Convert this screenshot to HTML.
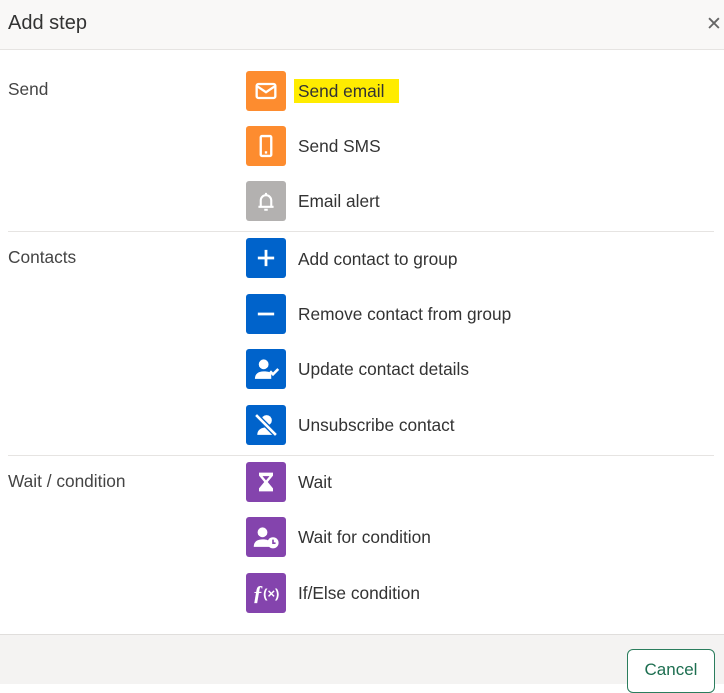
<!DOCTYPE html>
<html><head><meta charset="utf-8"><style>
*{margin:0;padding:0;box-sizing:border-box}
body{width:724px;height:684px;overflow:hidden;background:#fff;font-family:"Liberation Sans",Arial,sans-serif;color:#333;position:relative}
.hdr{position:absolute;left:0;top:0;width:724px;height:50px;background:#f9f8f7;border-bottom:1px solid #e6e4e2}
.hdr .t{position:absolute;left:8px;top:12px;font-size:20px;color:#333}
.hdr .x{position:absolute;left:706px;top:13px;font-size:19px;font-weight:300;color:#666}
.lbl{position:absolute;left:8px;font-size:17.3px;color:#444}
.div{position:absolute;left:8px;width:706px;height:1px;background:#e6e4e2}
.ic{position:absolute;left:246px;width:40px;height:40px;border-radius:3px;display:flex;align-items:center;justify-content:center}
.ic svg{width:28px;height:28px}
.o{background:#fd8c2f}.g{background:#b3b1b0}.b{background:#0063cb}.p{background:#8444ad}
.it{position:absolute;left:298px;font-size:17.3px;color:#333}
.hl{position:absolute;left:294px;top:79px;width:105px;height:24px;background:#ffec00}
.ftr{position:absolute;left:0;top:634px;width:724px;height:50px;background:#f4f3f2;border-top:1px solid #e0dedc}
.btn{position:absolute;left:627px;top:649px;width:88px;height:44px;border:1.5px solid #2b7d5d;border-radius:6px;background:#fff;color:#1d6e50;font-size:17px;text-align:center;line-height:40px}
</style></head><body>
<div class="hdr"><div class="t">Add step</div><div class="x">✕</div></div>

<div class="lbl" style="top:79px">Send</div>
<div class="hl"></div>
<div class="ic o" style="top:71px"><svg viewBox="0 0 24 24" fill="none" stroke="#fff" stroke-width="2"><rect x="4" y="6" width="16" height="12" rx="1.5"/><path d="M4.5 8l7.5 5 7.5-5"/></svg></div>
<div class="it" style="top:81px">Send email</div>
<div class="ic o" style="top:126px"><svg viewBox="0 0 24 24" fill="none" stroke="#fff" stroke-width="2"><rect x="7.5" y="3.5" width="9" height="17" rx="1"/><path d="M11 17.5h2"/></svg></div>
<div class="it" style="top:136px">Send SMS</div>
<div class="ic g" style="top:181px"><svg viewBox="0 0 24 24" fill="none" stroke="#fff" stroke-width="1.8"><path d="M7.5 17V11.5a4.5 4.5 0 0 1 9 0V17M5.5 17h13M10.5 19.5h3M12 5v2"/></svg></div>
<div class="it" style="top:191px">Email alert</div>

<div class="div" style="top:231px"></div>
<div class="lbl" style="top:247px">Contacts</div>
<div class="ic b" style="top:238px"><svg viewBox="0 0 24 24" fill="none" stroke="#fff" stroke-width="2.4"><path d="M12 5v14M5 12h14"/></svg></div>
<div class="it" style="top:249px">Add contact to group</div>
<div class="ic b" style="top:294px"><svg viewBox="0 0 24 24" fill="none" stroke="#fff" stroke-width="2.4"><path d="M5 12h14"/></svg></div>
<div class="it" style="top:304px">Remove contact from group</div>
<div class="ic b" style="top:349px"><svg viewBox="0 0 24 24" fill="#fff"><circle cx="10" cy="8" r="4.2"/><path d="M2.5 20.5c0-4.5 3-6.5 7.5-6.5s6 1 6.5 2v4.5z"/><path d="M15.5 14l2.5 2.5L22.5 12" fill="none" stroke="#fff" stroke-width="2.2"/></svg></div>
<div class="it" style="top:359px">Update contact details</div>
<div class="ic b" style="top:405px"><svg viewBox="0 0 24 24" fill="#fff"><circle cx="12.5" cy="8" r="4.5"/><path d="M4.5 20.5c0-4.5 3.5-6.5 8-6.5s8 2 8 6.5z"/><path d="M3.5 3.5l17 17" stroke="#0063cb" stroke-width="4.5"/><path d="M3.5 3.5l17 17" stroke="#fff" stroke-width="2.2"/></svg></div>
<div class="it" style="top:415px">Unsubscribe contact</div>

<div class="div" style="top:455px"></div>
<div class="lbl" style="top:471px">Wait / condition</div>
<div class="ic p" style="top:462px"><svg viewBox="0 0 24 24" fill="#fff"><path d="M6 4h12v2.5l-4.5 5.5 4.5 5.5V20H6v-2.5l4.5-5.5L6 6.5z"/><path d="M9 7h6l-3 3.6z" fill="#8444ad"/></svg></div>
<div class="it" style="top:472px">Wait</div>
<div class="ic p" style="top:517px"><svg viewBox="0 0 24 24" fill="#fff"><circle cx="9" cy="8" r="4.2"/><path d="M1.5 20.5c0-4.5 3-6.5 7.5-6.5s5 1 6 2v4.5z"/><circle cx="18" cy="17" r="4.8"/><path d="M18 14.3v3h2.2" fill="none" stroke="#8444ad" stroke-width="1.4"/></svg></div>
<div class="it" style="top:527px">Wait for condition</div>
<div class="ic p" style="top:573px"><span style="color:#fff;font-family:'Liberation Serif',serif;font-style:italic;font-weight:bold;font-size:21px">ƒ</span><span style="color:#fff;font-weight:bold;font-size:13px">(×)</span></div>
<div class="it" style="top:583px">If/Else condition</div>

<div class="ftr"></div>
<div class="btn">Cancel</div>
</body></html>
